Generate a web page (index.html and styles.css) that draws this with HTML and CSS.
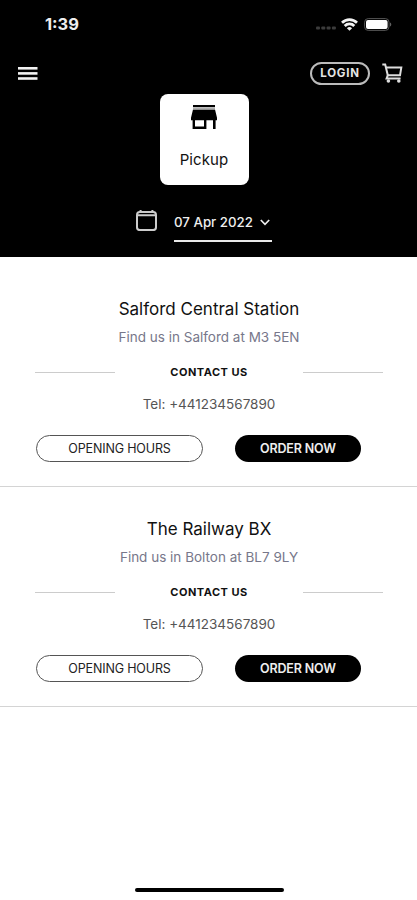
FILE: index.html
```html
<!DOCTYPE html>
<html lang="en">
<head>
    <meta charset="UTF-8">
    <meta name="viewport" content="width=device-width, initial-scale=1.0">
    <title>Pickup</title>
    <link rel="stylesheet" href="styles.css">
</head>
<body>
    <header class="header">
        <!-- Status bar -->
        <div class="status-bar">
            <span class="time">1:39</span>
            <div class="status-icons">
                <svg class="signal" width="20" height="4" viewBox="0 0 20 4" fill="#3c3c3c">
                    <rect x="0" y="0.5" width="4" height="3" rx="1"/>
                    <rect x="5.3" y="0.5" width="4" height="3" rx="1"/>
                    <rect x="10.6" y="0.5" width="4" height="3" rx="1"/>
                    <rect x="15.9" y="0.5" width="4" height="3" rx="1"/>
                </svg>
                <svg class="wifi" width="17" height="13" viewBox="0 0 17 13" fill="none" stroke="#f4f4f4" stroke-width="2.7">
                    <path d="M1 4.8a10.6 10.6 0 0 1 15 0"/>
                    <path d="M3.7 8a6.6 6.6 0 0 1 9.6 0"/>
                    <path d="M8.5 12.8 5.9 10.2a3.7 3.7 0 0 1 5.2 0z" fill="#f4f4f4" stroke="none"/>
                </svg>
                <svg class="battery" width="28" height="13" viewBox="0 0 28 13">
                    <rect x="0.6" y="0.6" width="24.4" height="11.8" rx="3.6" fill="none" stroke="#555"/>
                    <rect x="2" y="2" width="21.6" height="9" rx="2" fill="#fff"/>
                    <path d="M26.2 4.5v4c1.4-.6 1.4-3.4 0-4z" fill="#777"/>
                </svg>
            </div>
        </div>

        <!-- Navigation -->
        <nav class="nav-bar">
            <svg class="menu-icon" width="20" height="13" viewBox="0 0 20 13" fill="#f2f2f2">
                <rect width="19.5" height="2.6"/>
                <rect y="5.1" width="19.5" height="2.6"/>
                <rect y="10.2" width="19.5" height="2.6"/>
            </svg>
            <button class="login-btn">LOGIN</button>
            <svg class="cart-icon" width="21" height="21" viewBox="0 0 21 21" fill="none" stroke="#ddd" stroke-width="2">
                <path d="M.3 1.5h2.9l2.6 10.8"/>
                <path d="M4 4.6h15.3l-1.3 7.7H5.8L4.6 15.4h14"/>
                <circle cx="6.4" cy="18" r="1.8" fill="#ddd" stroke="none"/>
                <circle cx="16.8" cy="18" r="1.8" fill="#ddd" stroke="none"/>
            </svg>
        </nav>

        <div class="pickup-card">
            <svg width="26" height="24" viewBox="0 0 26 24">
                <path d="M2 0h22v2.2H2zM2 4.6h22l2 8.2v2.4h-1.4V24H22v-8.8h-6.6V24H1.6v-8.8H0v-2.4zM4 15.2v6.4h9v-6.4z" fill="#000" fill-rule="evenodd"/>
                <path d="M2 3.9h22" stroke="#999" stroke-width="1.4"/>
            </svg>
            <span>Pickup</span>
        </div>

        <div class="date-row">
            <svg width="21" height="21" viewBox="0 0 21 21" fill="none" stroke="#ccc" stroke-width="2">
                <rect x="1" y="2.1" width="19" height="18" rx="2.8"/>
                <path d="M1 5.2h19M4.6 0v3M16.4 0v3"/>
            </svg>
            <div class="date-select">
                <span>07 Apr 2022</span>
                <svg width="10" height="7" viewBox="0 0 10 7" fill="none" stroke="#eee" stroke-width="1.7">
                    <path d="M.8 1 5 5.3 9.2 1"/>
                </svg>
            </div>
        </div>
    </header>

    <!-- Stores -->
    <main>
        <section class="store">
            <h2>Salford Central Station</h2>
            <p class="address">Find us in Salford at M3 5EN</p>
            <div class="contact">CONTACT US</div>
            <p class="tel">Tel: +441234567890</p>
            <div class="actions">
                <button class="hours-btn">OPENING HOURS</button>
                <button class="order-btn">ORDER NOW</button>
            </div>
        </section>
        <section class="store">
            <h2>The Railway BX</h2>
            <p class="address">Find us in Bolton at BL7 9LY</p>
            <div class="contact">CONTACT US</div>
            <p class="tel">Tel: +441234567890</p>
            <div class="actions">
                <button class="hours-btn">OPENING HOURS</button>
                <button class="order-btn">ORDER NOW</button>
            </div>
        </section>
    </main>

    <div class="home-indicator"></div>
</body>
</html>
```
FILE: styles.css
```css
/* Global styles */
* {
    box-sizing: border-box;
}

body {
    font-family: Inter, "Liberation Sans", sans-serif;
    background-color: #fff;
    color: #111;
    margin: 0;
    height: 900px;
    display: flex;
    flex-direction: column;
    overflow: hidden;
}

button {
    font-family: inherit;
    padding: 0;
    cursor: pointer;
}

svg {
    display: block;
    flex-shrink: 0;
}

/* Header styles */
.header {
    background-color: #000;
    color: #eee;
    height: 257px;
    display: flex;
    flex-direction: column;
    align-items: center;
}

.status-bar {
    width: 100%;
    height: 48px;
    padding: 0 25px 0 45px;
    display: flex;
    justify-content: space-between;
    align-items: center;
}

.time {
    font-size: 16.5px;
    font-weight: 700;
}

.status-icons {
    display: flex;
    align-items: center;
}

.signal {
    margin: 8px 5px 0 0;
}

.wifi {
    margin-right: 6px;
}

.nav-bar {
    width: 100%;
    height: 46px;
    padding: 4px 14px 0 18px;
    display: flex;
    align-items: center;
}

.login-btn {
    width: 60px;
    height: 23px;
    margin: 0 12px 0 auto;
    border: 2px solid #bbb;
    border-radius: 12px;
    background-color: #000;
    color: #e4e4e4;
    font-size: 11.5px;
    font-weight: 700;
    letter-spacing: 0.8px;
}

.pickup-card {
    width: 89px;
    height: 91px;
    margin-right: 9px;
    padding-top: 11px;
    border-radius: 8px;
    background-color: #fff;
    color: #111;
    display: flex;
    flex-direction: column;
    align-items: center;
    gap: 21px;
}

.pickup-card span {
    font-size: 15px;
    line-height: 20px;
    letter-spacing: 0.1px;
}

.date-row {
    display: flex;
    gap: 17px;
    margin: 25px 9px 0 0;
}

.date-select {
    width: 98px;
    height: 32px;
    padding: 0 2px 6px 0;
    border-bottom: 2px solid #e8e8e8;
    display: flex;
    justify-content: space-between;
    align-items: center;
    font-size: 13.3px;
    font-weight: 500;
    white-space: nowrap;
}

/* Store styles */
.store {
    height: 220px;
    padding: 30px 34px 0 35px;
    border-bottom: 1px solid #d4d4d4;
    text-align: center;
}

.store:first-child {
    height: 230px;
    padding-top: 40px;
}

.store h2 {
    margin: 0;
    font-size: 17px;
    font-weight: 400;
    line-height: 24px;
}

.address,
.tel {
    margin: 0;
    font-size: 13.5px;
    line-height: 20px;
}

.address {
    margin-top: 6px;
    color: #77778a;
}

.contact {
    margin-top: 15px;
    display: flex;
    justify-content: space-between;
    align-items: center;
    font-size: 11px;
    font-weight: 700;
    line-height: 20px;
    letter-spacing: 0.5px;
}

.contact::before,
.contact::after {
    content: "";
    width: 80px;
    height: 1px;
    background-color: #ccc;
}

.tel {
    margin-top: 12px;
    color: #555;
}

.actions {
    margin-top: 21px;
    padding: 0 22px 0 1px;
    display: flex;
    justify-content: space-between;
}

.hours-btn,
.order-btn {
    height: 27px;
    border-radius: 14px;
    font-size: 12.5px;
    letter-spacing: -0.15px;
}

.hours-btn {
    width: 167px;
    border: 1px solid #555;
    background-color: #fff;
    color: #222;
}

.order-btn {
    width: 126px;
    border: none;
    background-color: #000;
    color: #eee;
    font-weight: 600;
}

.home-indicator {
    width: 149px;
    height: 4px;
    margin: auto 133px 8px 135px;
    border-radius: 2px;
    background-color: #000;
}
```
